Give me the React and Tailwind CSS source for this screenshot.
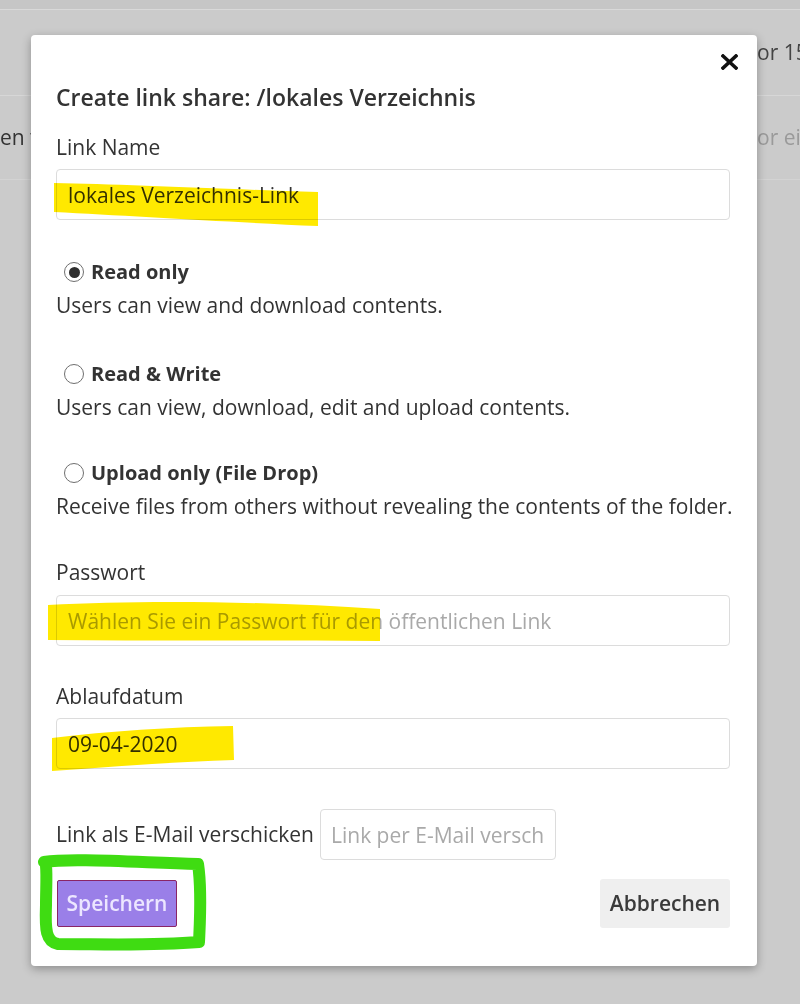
import React from 'react'

const OPEN = "font-['Open_Sans','DejaVu_Sans',sans-serif]"

function Radio({ checked, label, desc, className }) {
  return (
    <div className={className}>
      <div className="flex items-center h-[26px] pl-[8px]">
        <span className="w-[20px] h-[20px] rounded-full border-[1.5px] border-[#6f6f6f] bg-white flex items-center justify-center">
          {checked && <span className="w-[11px] h-[11px] rounded-full bg-[#2e2e2e]" />}
        </span>
        <span className="ml-[7px] text-[20px] font-bold text-[#333]">{label}</span>
      </div>
      <p className="mt-[7px] leading-[26px] whitespace-nowrap">{desc}</p>
    </div>
  )
}

function Field({ value, placeholder, className }) {
  return (
    <input
      readOnly
      value={value}
      placeholder={placeholder}
      className={`block w-full h-[51px] border border-[#dcdcdc] rounded-[4px] px-[11px] text-[21px] text-[#333] placeholder:text-[#a9a9a9] outline-none bg-white ${className || ''}`}
    />
  )
}

function Marks() {
  return (
    <svg className="absolute left-0 top-0 pointer-events-none" width="800" height="1004" viewBox="0 0 800 1004">
      <g fill="#ffe900" style={{ mixBlendMode: 'multiply' }}>
        <path d="M54 183 C120 184 220 189 318 192 L318 226 C230 222 130 216 54 212 Z" />
        <path d="M48 605 C140 600 260 601 380 609 L380 641 C260 640 150 641 48 640 Z" />
        <path d="M52 738 C110 731 170 727 233 726 L234 760 C170 762 110 767 52 771 Z" />
      </g>
      <path
        d="M44 862 C70 858 130 862 198 864 C202 890 200 920 199 942 C150 946 100 944 58 944 C46 942 45 930 46 905 C46 890 47 875 46 866"
        fill="none"
        stroke="#3fdc12"
        strokeWidth="12"
        strokeLinecap="round"
        strokeLinejoin="round"
      />
    </svg>
  )
}

export default function App() {
  return (
    <div className={`relative w-[800px] h-[1004px] overflow-hidden bg-[#cbcbcb] text-[21px] text-[#333] ${OPEN}`}>
      {/* page behind the dialog */}
      <div className="h-[10px] border-b border-[#d9d9d9] bg-[#c6c6c6]" />
      <div className="h-[86px] border-b border-[#d7d7d7] flex items-center justify-end">
        <span className="text-[21px] text-[#444] whitespace-nowrap w-[43px] overflow-hidden">or 15</span>
      </div>
      <div className="h-[84px] border-b border-[#d3d3d3] flex items-center justify-between">
        <span className="text-[21px] text-[#333] whitespace-nowrap w-[31px] overflow-hidden">en v</span>
        <span className="text-[21px] text-[#9a9a9a] whitespace-nowrap w-[43px] overflow-hidden">or ei</span>
      </div>

      {/* dialog */}
      <div className="absolute left-[31px] top-[35px] w-[726px] bg-white rounded-[4px] shadow-[0_3px_10px_rgba(0,0,0,0.3)] pl-[25px] pr-[27px] pt-[19px] pb-[38px]">
        <div className="flex justify-end h-[16px] -mr-[8px]">
          <svg width="17" height="16" viewBox="0 0 17 16">
            <path d="M2 2 L15 14 M15 2 L2 14" stroke="#111" strokeWidth="3.6" strokeLinecap="square" />
          </svg>
        </div>
        <h2 className="mt-[13px] text-[23px] leading-[28px] font-semibold text-[#333]">Create link share: /lokales Verzeichnis</h2>

        <p className="mt-[23px] leading-[26px]">Link Name</p>
        <Field className="mt-[9px]" value="lokales Verzeichnis-Link" />

        <Radio className="mt-[39px]" checked label="Read only" desc="Users can view and download contents." />
        <Radio className="mt-[43px]" label="Read & Write" desc="Users can view, download, edit and upload contents." />
        <Radio className="mt-[40px]" label="Upload only (File Drop)" desc="Receive files from others without revealing the contents of the folder." />

        <p className="mt-[40px] leading-[26px]">Passwort</p>
        <Field className="mt-[10px]" value="" placeholder="Wählen Sie ein Passwort für den öffentlichen Link" />

        <p className="mt-[37px] leading-[26px]">Ablaufdatum</p>
        <Field className="mt-[9px]" value="09-04-2020" />

        <div className="mt-[40px] flex items-center gap-[6px]">
          <span className="whitespace-nowrap">Link als E-Mail verschicken</span>
          <input
            readOnly
            placeholder="Link per E-Mail verschicken"
            className="w-[236px] h-[51px] border border-[#dcdcdc] rounded-[4px] px-[10px] text-[21px] placeholder:text-[#a9a9a9] outline-none"
          />
        </div>

        <div className="mt-[19px] flex items-center justify-between">
          <button className="ml-[1px] w-[120px] h-[47px] rounded-[2px] bg-[#9a7fe8] border border-[#8a2566] text-[#ece6ff] font-semibold text-[21px]">
            Speichern
          </button>
          <button className="w-[130px] h-[49px] rounded-[3px] bg-[#efefef] text-[#3a3a3a] font-semibold text-[21px]">
            Abbrechen
          </button>
        </div>
      </div>

      <Marks />
    </div>
  )
}
